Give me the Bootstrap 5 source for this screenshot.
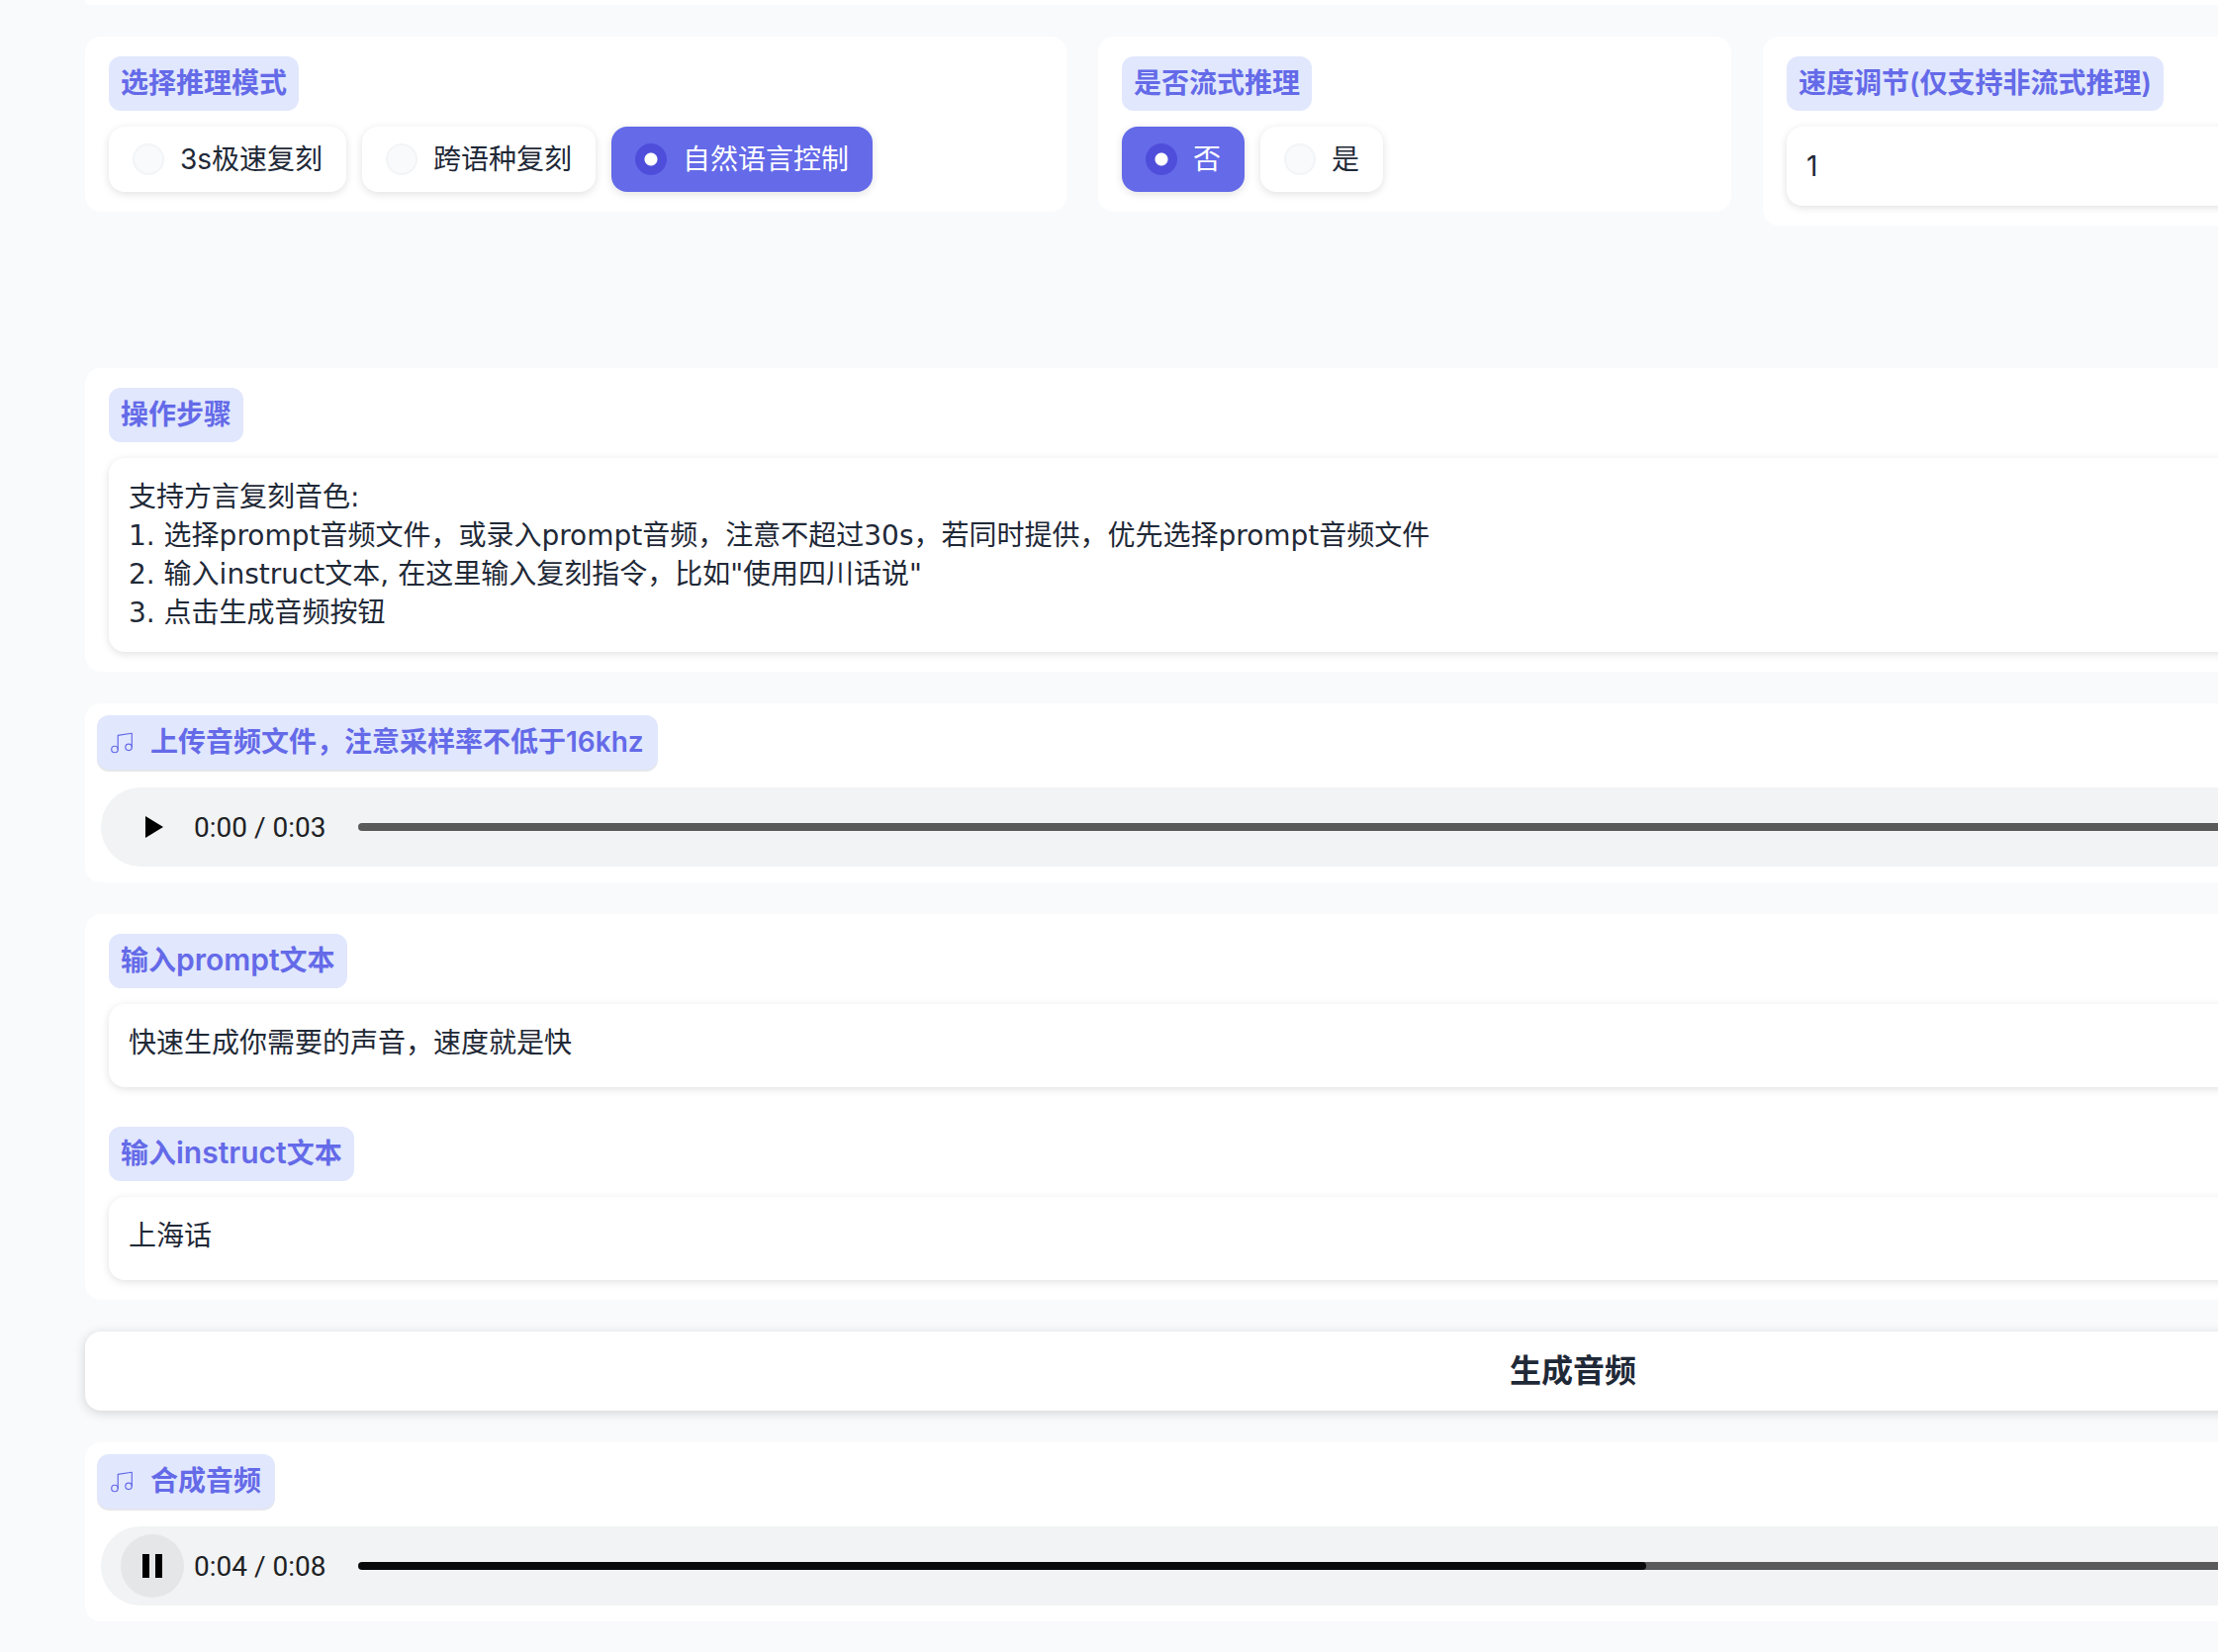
<!DOCTYPE html>
<html lang="zh-CN">
<head>
<meta charset="utf-8">
<meta name="viewport" content="width=device-width, initial-scale=1">
<title>语音合成</title>
<link href="https://cdn.jsdelivr.net/npm/bootstrap@5.3.0/dist/css/bootstrap.min.css" rel="stylesheet">
<style>
  :root { --accent: #646ae8; --accent-deep: #4f4edb; --tint: #e1e7fd; --ink: #1f2937; }
  html, body { overflow: hidden; }
  body {
    background: #f9fafc; color: var(--ink);
    font-family: Inter, "Noto Sans CJK SC", sans-serif;
    font-size: 28px; line-height: 39px;
  }
  .studio { min-width: 3094px; padding-left: 86px; }
  .stack { gap: 32px; }
  .panel { background: #fff; border-radius: 16px; padding: 20px 24px; }
  .panel-end { height: 5px; padding: 0; border-radius: 0 0 16px 16px; }
  .options { gap: 32px; margin-bottom: 112px; }
  .span-mode { flex: 59 1 0; }
  .span-stream { flex: 37 1 0; }
  .span-speed { flex: 79 1 0; }
  .tag {
    display: table; margin: 0 0 16px; padding: 8px 12px; border-radius: 12px;
    background: var(--tint); color: var(--accent); font-weight: 600;
    width: auto; font-size: 28px; line-height: 39px;
  }
  .choices { clear: both; }
  .latin { font-size: 30px; line-height: 1; }
  .choice {
    gap: 16px; height: 66px; padding: 0 24px; border-radius: 16px; background: #fff;
    box-shadow: 0 2px 8px rgba(0,0,0,.12); cursor: pointer;
  }
  .choice input {
    appearance: none; width: 32px; height: 32px; margin: 0; border-radius: 50%;
    background: #f9fafc; border: 2px solid #f3f4f6;
  }
  .choice:has(input:checked) { background: var(--accent); color: #fff; }
  .choice input:checked {
    border-color: var(--accent-deep);
    background: radial-gradient(circle, #fff 6px, var(--accent-deep) 7px);
  }
  .field {
    padding: 20px; border: 0; border-radius: 16px; background: #fff; color: var(--ink);
    font-size: 28px; line-height: 39px; resize: none; overflow: hidden; display: block;
    box-shadow: 0 2px 8px rgba(0,0,0,.12);
  }
  .field-number { height: 80px; }
  .field-line { height: 84px; }
  .field-steps { height: 196px; font-family: "DejaVu Sans", "Noto Sans CJK SC", sans-serif; }
  .fields { gap: 40px; }
  .generate {
    height: 80px; border: 0; border-radius: 16px; background: #fff; color: var(--ink);
    font-size: 32px; font-weight: 700; line-height: 44px; box-shadow: 0 2px 12px rgba(0,0,0,.16);
  }
  .clip { padding: 12px 12px 16px; }
  .clip .tag { display: flex; width: fit-content; align-items: center; gap: 16px; margin-bottom: 18px; padding-right: 14px; box-shadow: 0 2px 0 #e5e7eb; }
  .clip .tag svg { width: 26px; height: 26px; }
  .player {
    height: 80px; margin: 0 4px; padding: 0 120px 0 20px; border-radius: 40px; background: #f1f3f4;
    font-family: Roboto, sans-serif; color: #202124;
  }
  .transport { width: 64px; height: 64px; margin-right: 10px; border: 0; padding: 0; border-radius: 50%; background: none; color: #000; }
  .transport svg { width: 24px; height: 24px; }
  .transport-on { background: #e5e6e7; }
  .elapsed { width: 166px; }
  .seek {
    appearance: none; height: 8px; margin: 0; border-radius: 4px; background: #5a5a5a;
  }
  .seek::-webkit-slider-thumb { appearance: none; width: 8px; height: 8px; border-radius: 4px; background: transparent; }
  .seek-half { background: linear-gradient(90deg, #0a0a0a 50%, #5a5a5a 50%); }
  .seek-half::-webkit-slider-thumb { background: #0a0a0a; }
</style>
</head>
<body>
<main class="studio d-flex flex-column stack">
  <div class="panel panel-end"></div>

  <div class="d-flex align-items-start options">
    <fieldset class="panel span-mode">
      <legend class="tag float-start">选择推理模式</legend>
      <div class="choices d-flex gap-3">
        <label class="choice d-flex align-items-center"><input type="radio" name="mode"><span>3s极速复刻</span></label>
        <label class="choice d-flex align-items-center"><input type="radio" name="mode"><span>跨语种复刻</span></label>
        <label class="choice d-flex align-items-center"><input type="radio" name="mode" checked><span>自然语言控制</span></label>
      </div>
    </fieldset>
    <fieldset class="panel span-stream">
      <legend class="tag float-start">是否流式推理</legend>
      <div class="choices d-flex gap-3">
        <label class="choice d-flex align-items-center"><input type="radio" name="stream" checked><span>否</span></label>
        <label class="choice d-flex align-items-center"><input type="radio" name="stream"><span>是</span></label>
      </div>
    </fieldset>
    <div class="panel span-speed">
      <label class="tag" for="speed">速度调节(仅支持非流式推理)</label>
      <input class="field field-number w-100" id="speed" type="number" value="1">
    </div>
  </div>

  <section class="panel">
    <label class="tag" for="steps">操作步骤</label>
    <textarea class="field field-steps w-100" id="steps" readonly>支持方言复刻音色:
1. 选择prompt音频文件，或录入prompt音频，注意不超过30s，若同时提供，优先选择prompt音频文件
2. 输入instruct文本, 在这里输入复刻指令，比如"使用四川话说"
3. 点击生成音频按钮</textarea>
  </section>

  <section class="panel clip">
    <div class="tag">
      <svg viewBox="0 0 24 24" fill="none" stroke="currentColor" stroke-width="1.1" stroke-linecap="round" stroke-linejoin="round" aria-hidden="true"><path d="M8.5 18V5l13-2v13"/><circle cx="5.5" cy="18" r="3"/><circle cx="18.5" cy="16" r="3"/></svg>
      <span>上传音频文件，注意采样率不低于16khz</span>
    </div>
    <div class="player d-flex align-items-center">
      <button class="transport d-flex align-items-center justify-content-center" type="button" aria-label="播放"><svg viewBox="0 0 24 24" aria-hidden="true"><path d="M5 1v22l18-11z" fill="currentColor"/></svg></button>
      <span class="elapsed">0:00 / 0:03</span>
      <input class="seek flex-fill" type="range" min="0" max="3" value="0" aria-label="播放进度">
    </div>
  </section>

  <section class="panel d-flex flex-column fields">
    <div>
      <label class="tag" for="prompt">输入<span class="latin">prompt</span>文本</label>
      <textarea class="field field-line w-100" id="prompt" rows="1">快速生成你需要的声音，速度就是快</textarea>
    </div>
    <div>
      <label class="tag" for="instruct">输入<span class="latin">instruct</span>文本</label>
      <textarea class="field field-line w-100" id="instruct" rows="1">上海话</textarea>
    </div>
  </section>

  <button class="generate" type="button">生成音频</button>

  <section class="panel clip">
    <div class="tag">
      <svg viewBox="0 0 24 24" fill="none" stroke="currentColor" stroke-width="1.1" stroke-linecap="round" stroke-linejoin="round" aria-hidden="true"><path d="M8.5 18V5l13-2v13"/><circle cx="5.5" cy="18" r="3"/><circle cx="18.5" cy="16" r="3"/></svg>
      <span>合成音频</span>
    </div>
    <div class="player d-flex align-items-center">
      <button class="transport transport-on d-flex align-items-center justify-content-center" type="button" aria-label="暂停"><svg viewBox="0 0 24 24" aria-hidden="true"><path d="M2 0h7v24H2zM15 0h7v24h-7z" fill="currentColor"/></svg></button>
      <span class="elapsed">0:04 / 0:08</span>
      <input class="seek seek-half flex-fill" type="range" min="0" max="8" value="4" aria-label="播放进度">
    </div>
  </section>
</main>
<script src="https://cdn.jsdelivr.net/npm/bootstrap@5.3.0/dist/js/bootstrap.bundle.min.js"></script>
</body>
</html>
